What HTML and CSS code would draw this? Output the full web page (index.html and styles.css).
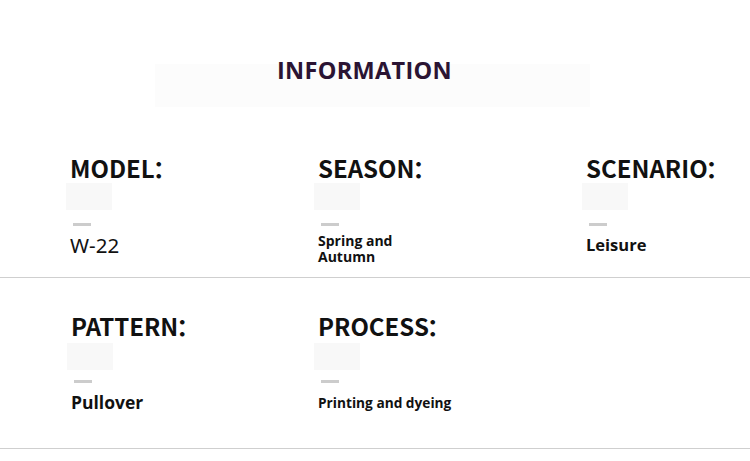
FILE: index.html
```html
<!DOCTYPE html>
<html>
<head>
<meta charset="utf-8">
<link rel="stylesheet" href="styles.css">
</head>
<body>
<div class="page">
  <div class="head">
    <div class="head-box"><h1 class="title">INFORMATION</h1></div>
  </div>
  <div class="row row-1">
    <div class="cell c1">
      <div class="label">MODEL<span class="colon">：</span></div>
      <div class="shade"></div>
      <div class="dash"></div>
      <div class="value regular">W-22</div>
    </div>
    <div class="cell c2">
      <div class="label">SEASON<span class="colon">：</span></div>
      <div class="shade"></div>
      <div class="dash"></div>
      <div class="value small"><span class="line">Spring and</span><span class="line">Autumn</span></div>
    </div>
    <div class="cell c3">
      <div class="label">SCENARIO<span class="colon">：</span></div>
      <div class="shade"></div>
      <div class="dash"></div>
      <div class="value mid">Leisure</div>
    </div>
  </div>
  <div class="row row-2">
    <div class="cell c1b">
      <div class="label">PATTERN<span class="colon">：</span></div>
      <div class="shade"></div>
      <div class="dash"></div>
      <div class="value big">Pullover</div>
    </div>
    <div class="cell c2b">
      <div class="label">PROCESS<span class="colon">：</span></div>
      <div class="shade"></div>
      <div class="dash"></div>
      <div class="value small2">Printing and dyeing</div>
    </div>
  </div>
</div>
</body>
</html>
```
FILE: styles.css
```css
html, body {
  margin: 0;
  padding: 0;
  background: #ffffff;
}
.page {
  width: 750px;
  height: 461px;
  font-family: "Noto Sans", "Open Sans", sans-serif;
}
.head {
  padding-top: 64px;
  padding-left: 155px;
  height: 148px;
  box-sizing: border-box;
}
.head-box {
  width: 435px;
  height: 43px;
  background: #fcfcfc;
}
.title {
  margin: 0;
  padding-left: 122px;
  font-family: "Open Sans", "Noto Sans", sans-serif;
  font-weight: 700;
  font-size: 23.5px;
  line-height: 12px;
  color: #2b1433;
  letter-spacing: 0.3px;
}
.row {
  display: flex;
  border-bottom: 1px solid #cfcfcf;
  box-sizing: border-box;
}
.row-1 { height: 130px; padding-top: 5px; }
.row-2 { height: 171px; padding-top: 33px; }
.cell {
  display: flex;
  flex-direction: column;
  align-items: flex-start;
}
.c1 { padding-left: 70px; width: 248px; }
.c2 { width: 268px; }
.c1b { padding-left: 71px; width: 247px; }
.label {
  font-family: "Noto Sans CJK SC", "Noto Sans", sans-serif;
  font-weight: 700;
  font-size: 24px;
  line-height: 30px;
  color: #111;
  height: 30px;
  white-space: nowrap;
}
.colon {
  margin-left: -2px;
}
.shade {
  width: 46px;
  height: 27px;
  background: #f8f8f8;
  margin-left: -4px;
  margin-top: 0;
}
.row-2 .shade { margin-top: 2px; }
.dash {
  width: 18px;
  height: 3px;
  background: #cccccc;
  margin-left: 3px;
  margin-top: 13px;
}
.row-2 .dash { margin-top: 10px; }
.value {
  color: #111;
  font-family: "Open Sans", "Noto Sans", sans-serif;
  font-weight: 700;
  margin-top: 7px;
}
.row-2 .value { margin-top: 8px; }
.regular {
  font-family: "Noto Sans", "Open Sans", sans-serif;
  font-weight: 400;
  font-size: 20.5px;
  line-height: 24px;
  color: #111;
}
.small {
  display: flex;
  flex-direction: column;
  font-size: 14px;
  line-height: 16px;
}
.line {
  display: block;
  height: 16px;
}
.mid {
  font-size: 16.5px;
  line-height: 22px;
  margin-top: 8px;
}
.big {
  font-size: 17.5px;
  line-height: 22px;
}
.row-2 .small2 {
  font-size: 13.7px;
  line-height: 22px;
  margin-top: 9px;
}
```
